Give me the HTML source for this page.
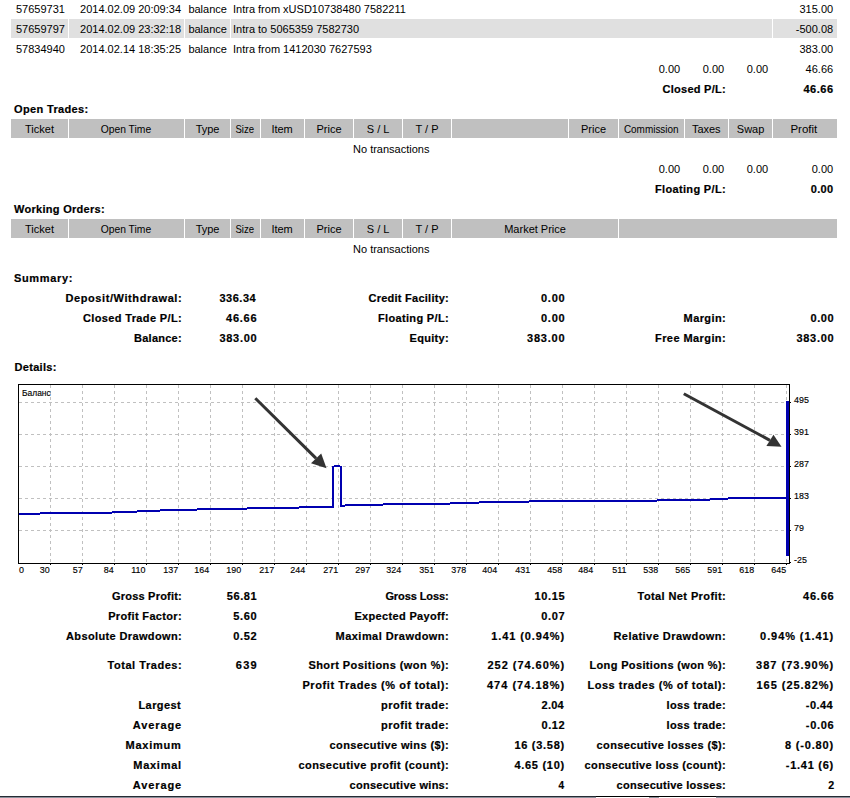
<!DOCTYPE html>
<html><head><meta charset="utf-8"><title>Statement</title><style>
html,body{margin:0;padding:0;background:#fff;}
body{width:850px;height:798px;position:relative;overflow:hidden;font-family:"Liberation Sans", sans-serif;color:#000;}
.r,.b{position:absolute;white-space:nowrap;font-size:11px;line-height:20px;}
.b{font-weight:bold;-webkit-text-stroke:0.2px #000;}
.s10{font-size:10px;}
.l{transform-origin:left center}
.r.r{}
.bg{position:absolute;}
</style></head>
<body>
<div class="bg" style="left:11px;top:19px;width:57px;height:19px;background:#e0e0e0"></div><div class="bg" style="left:69px;top:19px;width:115px;height:19px;background:#e0e0e0"></div><div class="bg" style="left:185px;top:19px;width:45px;height:19px;background:#e0e0e0"></div><div class="bg" style="left:231px;top:19px;width:541px;height:19px;background:#e0e0e0"></div><div class="bg" style="left:773px;top:19px;width:64px;height:19px;background:#e0e0e0"></div><div class="bg" style="left:11px;top:119px;width:57px;height:19px;background:#c0c0c0"></div><div class="bg" style="left:69px;top:119px;width:115px;height:19px;background:#c0c0c0"></div><div class="bg" style="left:185px;top:119px;width:45px;height:19px;background:#c0c0c0"></div><div class="bg" style="left:231px;top:119px;width:29px;height:19px;background:#c0c0c0"></div><div class="bg" style="left:261px;top:119px;width:43px;height:19px;background:#c0c0c0"></div><div class="bg" style="left:305px;top:119px;width:48px;height:19px;background:#c0c0c0"></div><div class="bg" style="left:354px;top:119px;width:48px;height:19px;background:#c0c0c0"></div><div class="bg" style="left:403px;top:119px;width:48px;height:19px;background:#c0c0c0"></div><div class="bg" style="left:452px;top:119px;width:116px;height:19px;background:#c0c0c0"></div><div class="bg" style="left:569px;top:119px;width:49px;height:19px;background:#c0c0c0"></div><div class="bg" style="left:619px;top:119px;width:65px;height:19px;background:#c0c0c0"></div><div class="bg" style="left:685px;top:119px;width:43px;height:19px;background:#c0c0c0"></div><div class="bg" style="left:729px;top:119px;width:43px;height:19px;background:#c0c0c0"></div><div class="bg" style="left:773px;top:119px;width:64px;height:19px;background:#c0c0c0"></div><div class="bg" style="left:11px;top:219px;width:57px;height:19px;background:#c0c0c0"></div><div class="bg" style="left:69px;top:219px;width:115px;height:19px;background:#c0c0c0"></div><div class="bg" style="left:185px;top:219px;width:45px;height:19px;background:#c0c0c0"></div><div class="bg" style="left:231px;top:219px;width:29px;height:19px;background:#c0c0c0"></div><div class="bg" style="left:261px;top:219px;width:43px;height:19px;background:#c0c0c0"></div><div class="bg" style="left:305px;top:219px;width:48px;height:19px;background:#c0c0c0"></div><div class="bg" style="left:354px;top:219px;width:48px;height:19px;background:#c0c0c0"></div><div class="bg" style="left:403px;top:219px;width:48px;height:19px;background:#c0c0c0"></div><div class="bg" style="left:452px;top:219px;width:166px;height:19px;background:#c0c0c0"></div><div class="bg" style="left:619px;top:219px;width:218px;height:19px;background:#c0c0c0"></div><div class="bg" style="left:0;top:796px;width:850px;height:1px;background:#262b34"></div><div class="bg" style="left:0;top:797px;width:850px;height:1px;background:#8b919b"></div><div class="bg" style="left:596px;top:796px;width:120px;height:1px;background:#000"></div><div class="bg" style="left:596px;top:797px;width:53px;height:1px;background:#fff"></div><div class="bg" style="left:659px;top:797px;width:57px;height:1px;background:#fff"></div>
<svg width="850" height="798" style="position:absolute;left:0;top:0"><line x1="50.5" y1="385" x2="50.5" y2="563" stroke="#c0c0c0" stroke-width="1" stroke-dasharray="3 3" fill="none"/><line x1="82.5" y1="385" x2="82.5" y2="563" stroke="#c0c0c0" stroke-width="1" stroke-dasharray="3 3" fill="none"/><line x1="114.5" y1="385" x2="114.5" y2="563" stroke="#c0c0c0" stroke-width="1" stroke-dasharray="3 3" fill="none"/><line x1="146.5" y1="385" x2="146.5" y2="563" stroke="#c0c0c0" stroke-width="1" stroke-dasharray="3 3" fill="none"/><line x1="178.5" y1="385" x2="178.5" y2="563" stroke="#c0c0c0" stroke-width="1" stroke-dasharray="3 3" fill="none"/><line x1="210.5" y1="385" x2="210.5" y2="563" stroke="#c0c0c0" stroke-width="1" stroke-dasharray="3 3" fill="none"/><line x1="242.5" y1="385" x2="242.5" y2="563" stroke="#c0c0c0" stroke-width="1" stroke-dasharray="3 3" fill="none"/><line x1="274.5" y1="385" x2="274.5" y2="563" stroke="#c0c0c0" stroke-width="1" stroke-dasharray="3 3" fill="none"/><line x1="306.5" y1="385" x2="306.5" y2="563" stroke="#c0c0c0" stroke-width="1" stroke-dasharray="3 3" fill="none"/><line x1="338.5" y1="385" x2="338.5" y2="563" stroke="#c0c0c0" stroke-width="1" stroke-dasharray="3 3" fill="none"/><line x1="370.5" y1="385" x2="370.5" y2="563" stroke="#c0c0c0" stroke-width="1" stroke-dasharray="3 3" fill="none"/><line x1="402.5" y1="385" x2="402.5" y2="563" stroke="#c0c0c0" stroke-width="1" stroke-dasharray="3 3" fill="none"/><line x1="434.5" y1="385" x2="434.5" y2="563" stroke="#c0c0c0" stroke-width="1" stroke-dasharray="3 3" fill="none"/><line x1="466.5" y1="385" x2="466.5" y2="563" stroke="#c0c0c0" stroke-width="1" stroke-dasharray="3 3" fill="none"/><line x1="498.5" y1="385" x2="498.5" y2="563" stroke="#c0c0c0" stroke-width="1" stroke-dasharray="3 3" fill="none"/><line x1="530.5" y1="385" x2="530.5" y2="563" stroke="#c0c0c0" stroke-width="1" stroke-dasharray="3 3" fill="none"/><line x1="562.5" y1="385" x2="562.5" y2="563" stroke="#c0c0c0" stroke-width="1" stroke-dasharray="3 3" fill="none"/><line x1="594.5" y1="385" x2="594.5" y2="563" stroke="#c0c0c0" stroke-width="1" stroke-dasharray="3 3" fill="none"/><line x1="626.5" y1="385" x2="626.5" y2="563" stroke="#c0c0c0" stroke-width="1" stroke-dasharray="3 3" fill="none"/><line x1="658.5" y1="385" x2="658.5" y2="563" stroke="#c0c0c0" stroke-width="1" stroke-dasharray="3 3" fill="none"/><line x1="690.5" y1="385" x2="690.5" y2="563" stroke="#c0c0c0" stroke-width="1" stroke-dasharray="3 3" fill="none"/><line x1="722.5" y1="385" x2="722.5" y2="563" stroke="#c0c0c0" stroke-width="1" stroke-dasharray="3 3" fill="none"/><line x1="754.5" y1="385" x2="754.5" y2="563" stroke="#c0c0c0" stroke-width="1" stroke-dasharray="3 3" fill="none"/><line x1="786.5" y1="385" x2="786.5" y2="563" stroke="#c0c0c0" stroke-width="1" stroke-dasharray="3 3" fill="none"/><line x1="19" y1="402.5" x2="789" y2="402.5" stroke="#c0c0c0" stroke-width="1" stroke-dasharray="3 3" fill="none"/><line x1="19" y1="434.5" x2="789" y2="434.5" stroke="#c0c0c0" stroke-width="1" stroke-dasharray="3 3" fill="none"/><line x1="19" y1="466.5" x2="789" y2="466.5" stroke="#c0c0c0" stroke-width="1" stroke-dasharray="3 3" fill="none"/><line x1="19" y1="498.5" x2="789" y2="498.5" stroke="#c0c0c0" stroke-width="1" stroke-dasharray="3 3" fill="none"/><line x1="19" y1="530.5" x2="789" y2="530.5" stroke="#c0c0c0" stroke-width="1" stroke-dasharray="3 3" fill="none"/><rect x="18.5" y="384.5" width="771" height="179" fill="none" stroke="#000" stroke-width="1"/><rect x="50" y="564" width="1" height="1" fill="#000"/><rect x="82" y="564" width="1" height="1" fill="#000"/><rect x="114" y="564" width="1" height="1" fill="#000"/><rect x="146" y="564" width="1" height="1" fill="#000"/><rect x="178" y="564" width="1" height="1" fill="#000"/><rect x="210" y="564" width="1" height="1" fill="#000"/><rect x="242" y="564" width="1" height="1" fill="#000"/><rect x="274" y="564" width="1" height="1" fill="#000"/><rect x="306" y="564" width="1" height="1" fill="#000"/><rect x="338" y="564" width="1" height="1" fill="#000"/><rect x="370" y="564" width="1" height="1" fill="#000"/><rect x="402" y="564" width="1" height="1" fill="#000"/><rect x="434" y="564" width="1" height="1" fill="#000"/><rect x="466" y="564" width="1" height="1" fill="#000"/><rect x="498" y="564" width="1" height="1" fill="#000"/><rect x="530" y="564" width="1" height="1" fill="#000"/><rect x="562" y="564" width="1" height="1" fill="#000"/><rect x="594" y="564" width="1" height="1" fill="#000"/><rect x="626" y="564" width="1" height="1" fill="#000"/><rect x="658" y="564" width="1" height="1" fill="#000"/><rect x="690" y="564" width="1" height="1" fill="#000"/><rect x="722" y="564" width="1" height="1" fill="#000"/><rect x="754" y="564" width="1" height="1" fill="#000"/><rect x="786" y="564" width="1" height="1" fill="#000"/><rect x="790" y="402" width="1" height="1" fill="#000"/><rect x="790" y="434" width="1" height="1" fill="#000"/><rect x="790" y="466" width="1" height="1" fill="#000"/><rect x="790" y="498" width="1" height="1" fill="#000"/><rect x="790" y="530" width="1" height="1" fill="#000"/><rect x="790" y="562" width="1" height="1" fill="#000"/><rect x="19" y="513" width="21" height="2" fill="#0000b0"/><rect x="40" y="512" width="72" height="2" fill="#0000b0"/><rect x="112" y="511" width="25" height="2" fill="#0000b0"/><rect x="137" y="510" width="23" height="2" fill="#0000b0"/><rect x="160" y="509" width="37" height="2" fill="#0000b0"/><rect x="197" y="508" width="50" height="2" fill="#0000b0"/><rect x="247" y="507" width="52" height="2" fill="#0000b0"/><rect x="299" y="506" width="35" height="2" fill="#0000b0"/><rect x="332" y="466" width="2" height="42" fill="#0000b0"/><rect x="334" y="465" width="6" height="2" fill="#0000b0"/><rect x="340" y="466" width="2" height="41" fill="#0000b0"/><rect x="342" y="505" width="3" height="2" fill="#0000b0"/><rect x="345" y="504" width="38" height="2" fill="#0000b0"/><rect x="383" y="503" width="67" height="2" fill="#0000b0"/><rect x="450" y="502" width="29" height="2" fill="#0000b0"/><rect x="479" y="501" width="50" height="2" fill="#0000b0"/><rect x="529" y="500" width="128" height="2" fill="#0000b0"/><rect x="657" y="499" width="53" height="2" fill="#0000b0"/><rect x="710" y="498" width="18" height="2" fill="#0000b0"/><rect x="728" y="497" width="59" height="2" fill="#0000b0"/><rect x="786" y="401" width="3" height="155" fill="#0000b0"/><line x1="255.3" y1="398.2" x2="316.1" y2="458.35" stroke="#333" stroke-width="3"/><polygon points="326.5,468.3 311,463.3 321.2,453.4" fill="#333"/><line x1="683.8" y1="393.7" x2="769.95" y2="440.35" stroke="#333" stroke-width="3"/><polygon points="781.5,446.7 766.4,446 773.5,434.7" fill="#333"/></svg>
<div class="r" style="top:-1px;right:785.08px">57659731</div>
<div class="r" style="top:-1px;right:668.98px">2014.02.09 20:09:34</div>
<div class="r" style="top:-1px;right:623.08px">balance</div>
<div class="r" style="top:-1px;left:233.00px">Intra from xUSD10738480 7582211</div>
<div class="r" style="top:-1px;right:16.88px">315.00</div>
<div class="r" style="top:19px;right:785.08px">57659797</div>
<div class="r" style="top:19px;right:668.98px">2014.02.09 23:32:18</div>
<div class="r" style="top:19px;right:623.08px">balance</div>
<div class="r" style="top:19px;left:233.00px">Intra to 5065359 7582730</div>
<div class="r" style="top:19px;right:16.88px">-500.08</div>
<div class="r" style="top:39px;right:785.08px">57834940</div>
<div class="r" style="top:39px;right:668.98px">2014.02.14 18:35:25</div>
<div class="r" style="top:39px;right:623.08px">balance</div>
<div class="r" style="top:39px;left:233.00px">Intra from 1412030 7627593</div>
<div class="r" style="top:39px;right:16.88px">383.00</div>
<div class="r" style="top:59px;right:169.88px">0.00</div>
<div class="r" style="top:59px;right:125.88px">0.00</div>
<div class="r" style="top:59px;right:81.88px">0.00</div>
<div class="r" style="top:59px;right:16.88px">46.66</div>
<div class="b" style="top:79px;right:124.08px;letter-spacing:0.256px">Closed P/L:</div>
<div class="b" style="top:79px;right:16.33px;letter-spacing:0.548px">46.66</div>
<div class="b" style="top:99px;left:14.00px;letter-spacing:0.351px">Open Trades:</div>
<div class="r" style="top:119px;left:25.06px">Ticket</div>
<div class="r" style="top:119px;left:98.76px;transform:scaleX(0.9372);transform-origin:26.94px center">Open Time</div>
<div class="r" style="top:119px;left:195.64px">Type</div>
<div class="r" style="top:119px;left:234.06px;transform:scaleX(0.8693);transform-origin:10.64px center">Size</div>
<div class="r" style="top:119px;left:271.39px">Item</div>
<div class="r" style="top:119px;left:316.53px">Price</div>
<div class="r" style="top:119px;left:366.75px">S / L</div>
<div class="r" style="top:119px;left:415.56px">T / P</div>
<div class="r" style="top:119px;left:581.03px">Price</div>
<div class="r" style="top:119px;left:620.50px;transform:scaleX(0.9041);transform-origin:30.20px center">Commission</div>
<div class="r" style="top:119px;left:691.88px">Taxes</div>
<div class="r" style="top:119px;left:736.80px">Swap</div>
<div class="r" style="top:119px;left:791.49px;transform:scaleX(1.0462);transform-origin:12.81px center">Profit</div>
<div class="r" style="top:139px;left:353.04px">No transactions</div>
<div class="r" style="top:159px;right:169.88px">0.00</div>
<div class="r" style="top:159px;right:125.88px">0.00</div>
<div class="r" style="top:159px;right:81.88px">0.00</div>
<div class="r" style="top:159px;right:16.88px">0.00</div>
<div class="b" style="top:179px;right:124.00px;letter-spacing:0.338px">Floating P/L:</div>
<div class="b" style="top:179px;right:16.55px;letter-spacing:0.336px">0.00</div>
<div class="b" style="top:199px;left:14.00px;letter-spacing:0.291px">Working Orders:</div>
<div class="r" style="top:219px;left:25.06px">Ticket</div>
<div class="r" style="top:219px;left:98.76px;transform:scaleX(0.9372);transform-origin:26.94px center">Open Time</div>
<div class="r" style="top:219px;left:195.64px">Type</div>
<div class="r" style="top:219px;left:234.06px;transform:scaleX(0.8693);transform-origin:10.64px center">Size</div>
<div class="r" style="top:219px;left:271.39px">Item</div>
<div class="r" style="top:219px;left:316.53px">Price</div>
<div class="r" style="top:219px;left:366.75px">S / L</div>
<div class="r" style="top:219px;left:415.56px">T / P</div>
<div class="r" style="top:219px;left:504.19px">Market Price</div>
<div class="r" style="top:239px;left:353.04px">No transactions</div>
<div class="b" style="top:268px;left:14.00px;letter-spacing:0.652px">Summary:</div>
<div class="b" style="top:288px;right:667.75px;letter-spacing:0.585px">Deposit/Withdrawal:</div>
<div class="b" style="top:308px;right:667.98px;letter-spacing:0.360px">Closed Trade P/L:</div>
<div class="b" style="top:328px;right:668.08px;letter-spacing:0.259px">Balance:</div>
<div class="b" style="top:288px;right:593.89px;letter-spacing:0.495px">336.34</div>
<div class="b" style="top:308px;right:592.61px;letter-spacing:0.773px">46.66</div>
<div class="b" style="top:328px;right:592.69px;letter-spacing:0.695px">383.00</div>
<div class="b" style="top:288px;right:401.09px;letter-spacing:0.251px">Credit Facility:</div>
<div class="b" style="top:308px;right:401.00px;letter-spacing:0.338px">Floating P/L:</div>
<div class="b" style="top:328px;right:401.02px;letter-spacing:0.315px">Equity:</div>
<div class="b" style="top:288px;right:284.65px;letter-spacing:0.736px">0.00</div>
<div class="b" style="top:308px;right:284.65px;letter-spacing:0.736px">0.00</div>
<div class="b" style="top:328px;right:284.59px;letter-spacing:0.795px">383.00</div>
<div class="b" style="top:308px;right:123.95px;letter-spacing:0.391px">Margin:</div>
<div class="b" style="top:328px;right:123.91px;letter-spacing:0.423px">Free Margin:</div>
<div class="b" style="top:308px;right:15.81px;letter-spacing:0.569px">0.00</div>
<div class="b" style="top:328px;right:15.69px;letter-spacing:0.695px">383.00</div>
<div class="b" style="top:357px;left:14.50px;letter-spacing:0.304px">Details:</div>
<div class="b" style="top:586px;right:668.14px;letter-spacing:0.194px">Gross Profit:</div>
<div class="b" style="top:586px;right:592.81px;letter-spacing:0.573px">56.81</div>
<div class="b" style="top:586px;right:401.43px;letter-spacing:-0.092px">Gross Loss:</div>
<div class="b" style="top:586px;right:284.71px;letter-spacing:0.673px">10.15</div>
<div class="b" style="top:586px;right:123.94px;letter-spacing:0.399px">Total Net Profit:</div>
<div class="b" style="top:586px;right:15.63px;letter-spacing:0.748px">46.66</div>
<div class="b" style="top:606px;right:668.00px;letter-spacing:0.339px">Profit Factor:</div>
<div class="b" style="top:606px;right:592.71px;letter-spacing:0.669px">5.60</div>
<div class="b" style="top:606px;right:401.00px;letter-spacing:0.334px">Expected Payoff:</div>
<div class="b" style="top:606px;right:284.71px;letter-spacing:0.669px">0.07</div>
<div class="b" style="top:626px;right:667.97px;letter-spacing:0.369px">Absolute Drawdown:</div>
<div class="b" style="top:626px;right:592.71px;letter-spacing:0.669px">0.52</div>
<div class="b" style="top:626px;right:400.88px;letter-spacing:0.458px">Maximal Drawdown:</div>
<div class="b" style="top:626px;right:284.94px;letter-spacing:0.898px">1.41 (0.94%)</div>
<div class="b" style="top:626px;right:123.88px;letter-spacing:0.455px">Relative Drawdown:</div>
<div class="b" style="top:626px;right:15.92px;letter-spacing:0.917px">0.94% (1.41)</div>
<div class="b" style="top:655px;right:667.79px;letter-spacing:0.543px">Total Trades:</div>
<div class="b" style="top:655px;right:592.15px;letter-spacing:1.232px">639</div>
<div class="b" style="top:655px;right:400.90px;letter-spacing:0.439px">Short Positions (won %):</div>
<div class="b" style="top:655px;right:284.87px;letter-spacing:0.965px">252 (74.60%)</div>
<div class="b" style="top:655px;right:123.98px;letter-spacing:0.361px">Long Positions (won %):</div>
<div class="b" style="top:655px;right:15.84px;letter-spacing:1.002px">387 (73.90%)</div>
<div class="b" style="top:675px;right:400.74px;letter-spacing:0.595px">Profit Trades (% of total):</div>
<div class="b" style="top:675px;right:284.83px;letter-spacing:1.011px">474 (74.18%)</div>
<div class="b" style="top:675px;right:123.80px;letter-spacing:0.541px">Loss trades (% of total):</div>
<div class="b" style="top:675px;right:15.87px;letter-spacing:0.965px">165 (25.82%)</div>
<div class="b" style="top:695px;right:668.93px;letter-spacing:0.405px">Largest</div>
<div class="b" style="top:695px;right:400.84px;letter-spacing:0.495px">profit trade:</div>
<div class="b" style="top:695px;right:286.18px;letter-spacing:0.203px">2.04</div>
<div class="b" style="top:695px;right:123.99px;letter-spacing:0.343px">loss trade:</div>
<div class="b" style="top:695px;right:16.95px;letter-spacing:0.436px">-0.44</div>
<div class="b" style="top:715px;right:668.00px;letter-spacing:0.885px">Average</div>
<div class="b" style="top:715px;right:400.84px;letter-spacing:0.495px">profit trade:</div>
<div class="b" style="top:715px;right:284.85px;letter-spacing:0.536px">0.12</div>
<div class="b" style="top:715px;right:123.99px;letter-spacing:0.343px">loss trade:</div>
<div class="b" style="top:715px;right:15.70px;letter-spacing:0.686px">-0.06</div>
<div class="b" style="top:735px;right:668.48px;letter-spacing:0.741px">Maximum</div>
<div class="b" style="top:735px;right:400.95px;letter-spacing:0.391px">consecutive wins ($):</div>
<div class="b" style="top:735px;right:285.12px;letter-spacing:0.717px">16 (3.58)</div>
<div class="b" style="top:735px;right:123.97px;letter-spacing:0.364px">consecutive losses ($):</div>
<div class="b" style="top:735px;right:16.01px;letter-spacing:0.824px">8 (-0.80)</div>
<div class="b" style="top:755px;right:668.22px;letter-spacing:0.724px">Maximal</div>
<div class="b" style="top:755px;right:400.89px;letter-spacing:0.444px">consecutive profit (count):</div>
<div class="b" style="top:755px;right:285.12px;letter-spacing:0.717px">4.65 (10)</div>
<div class="b" style="top:755px;right:123.99px;letter-spacing:0.351px">consecutive loss (count):</div>
<div class="b" style="top:755px;right:16.11px;letter-spacing:0.724px">-1.41 (6)</div>
<div class="b" style="top:775px;right:668.00px;letter-spacing:0.885px">Average</div>
<div class="b" style="top:775px;right:401.07px;letter-spacing:0.269px">consecutive wins:</div>
<div class="b" style="top:775px;right:286.31px;transform:scaleX(0.9143);transform-origin:right center">4</div>
<div class="b" style="top:775px;right:124.09px;letter-spacing:0.251px">consecutive losses:</div>
<div class="b" style="top:775px;right:16.39px;transform:scaleX(0.9667);transform-origin:right center">2</div>
<div class="r" style="top:560.4px;left:19.00px;transform:scaleX(0.9200);transform-origin:left center;font-size:9.7px;-webkit-text-stroke:0.15px #000">0</div>
<div class="r" style="top:560.4px;right:800.56px;transform:scaleX(0.9200);transform-origin:right center;font-size:9.7px;-webkit-text-stroke:0.15px #000">30</div>
<div class="r" style="top:560.4px;right:767.64px;transform:scaleX(0.9200);transform-origin:right center;font-size:9.7px;-webkit-text-stroke:0.15px #000">57</div>
<div class="r" style="top:560.4px;right:736.56px;transform:scaleX(0.9200);transform-origin:right center;font-size:9.7px;-webkit-text-stroke:0.15px #000">84</div>
<div class="r" style="top:560.4px;right:704.56px;transform:scaleX(0.9200);transform-origin:right center;font-size:9.7px;-webkit-text-stroke:0.15px #000">110</div>
<div class="r" style="top:560.4px;right:671.64px;transform:scaleX(0.9200);transform-origin:right center;font-size:9.7px;-webkit-text-stroke:0.15px #000">137</div>
<div class="r" style="top:560.4px;right:640.56px;transform:scaleX(0.9200);transform-origin:right center;font-size:9.7px;-webkit-text-stroke:0.15px #000">164</div>
<div class="r" style="top:560.4px;right:608.56px;transform:scaleX(0.9200);transform-origin:right center;font-size:9.7px;-webkit-text-stroke:0.15px #000">190</div>
<div class="r" style="top:560.4px;right:575.64px;transform:scaleX(0.9200);transform-origin:right center;font-size:9.7px;-webkit-text-stroke:0.15px #000">217</div>
<div class="r" style="top:560.4px;right:544.56px;transform:scaleX(0.9200);transform-origin:right center;font-size:9.7px;-webkit-text-stroke:0.15px #000">244</div>
<div class="r" style="top:560.4px;right:511.64px;transform:scaleX(0.9200);transform-origin:right center;font-size:9.7px;-webkit-text-stroke:0.15px #000">271</div>
<div class="r" style="top:560.4px;right:479.64px;transform:scaleX(0.9200);transform-origin:right center;font-size:9.7px;-webkit-text-stroke:0.15px #000">297</div>
<div class="r" style="top:560.4px;right:448.56px;transform:scaleX(0.9200);transform-origin:right center;font-size:9.7px;-webkit-text-stroke:0.15px #000">324</div>
<div class="r" style="top:560.4px;right:415.64px;transform:scaleX(0.9200);transform-origin:right center;font-size:9.7px;-webkit-text-stroke:0.15px #000">351</div>
<div class="r" style="top:560.4px;right:383.64px;transform:scaleX(0.9200);transform-origin:right center;font-size:9.7px;-webkit-text-stroke:0.15px #000">378</div>
<div class="r" style="top:560.4px;right:352.56px;transform:scaleX(0.9200);transform-origin:right center;font-size:9.7px;-webkit-text-stroke:0.15px #000">404</div>
<div class="r" style="top:560.4px;right:319.64px;transform:scaleX(0.9200);transform-origin:right center;font-size:9.7px;-webkit-text-stroke:0.15px #000">431</div>
<div class="r" style="top:560.4px;right:287.64px;transform:scaleX(0.9200);transform-origin:right center;font-size:9.7px;-webkit-text-stroke:0.15px #000">458</div>
<div class="r" style="top:560.4px;right:256.56px;transform:scaleX(0.9200);transform-origin:right center;font-size:9.7px;-webkit-text-stroke:0.15px #000">484</div>
<div class="r" style="top:560.4px;right:223.64px;transform:scaleX(0.9200);transform-origin:right center;font-size:9.7px;-webkit-text-stroke:0.15px #000">511</div>
<div class="r" style="top:560.4px;right:191.64px;transform:scaleX(0.9200);transform-origin:right center;font-size:9.7px;-webkit-text-stroke:0.15px #000">538</div>
<div class="r" style="top:560.4px;right:159.64px;transform:scaleX(0.9200);transform-origin:right center;font-size:9.7px;-webkit-text-stroke:0.15px #000">565</div>
<div class="r" style="top:560.4px;right:127.64px;transform:scaleX(0.9200);transform-origin:right center;font-size:9.7px;-webkit-text-stroke:0.15px #000">591</div>
<div class="r" style="top:560.4px;right:95.64px;transform:scaleX(0.9200);transform-origin:right center;font-size:9.7px;-webkit-text-stroke:0.15px #000">618</div>
<div class="r" style="top:560.4px;right:63.64px;transform:scaleX(0.9200);transform-origin:right center;font-size:9.7px;-webkit-text-stroke:0.15px #000">645</div>
<div class="r" style="top:390.4px;left:794.00px;transform:scaleX(0.9200);transform-origin:left center;font-size:9.7px;-webkit-text-stroke:0.15px #000">495</div>
<div class="r" style="top:422.4px;left:794.00px;transform:scaleX(0.9200);transform-origin:left center;font-size:9.7px;-webkit-text-stroke:0.15px #000">391</div>
<div class="r" style="top:454.4px;left:794.00px;transform:scaleX(0.9200);transform-origin:left center;font-size:9.7px;-webkit-text-stroke:0.15px #000">287</div>
<div class="r" style="top:486.4px;left:794.00px;transform:scaleX(0.9200);transform-origin:left center;font-size:9.7px;-webkit-text-stroke:0.15px #000">183</div>
<div class="r" style="top:518.4px;left:794.00px;transform:scaleX(0.9200);transform-origin:left center;font-size:9.7px;-webkit-text-stroke:0.15px #000">79</div>
<div class="r" style="top:550.4px;left:794.00px;transform:scaleX(0.9200);transform-origin:left center;font-size:9.7px;-webkit-text-stroke:0.15px #000">-25</div>
<div class="r" style="top:383px;left:22.00px;transform:scaleX(0.8998);transform-origin:left center;font-size:9.4px;-webkit-text-stroke:0.15px #000">Баланс</div>
</body></html>
